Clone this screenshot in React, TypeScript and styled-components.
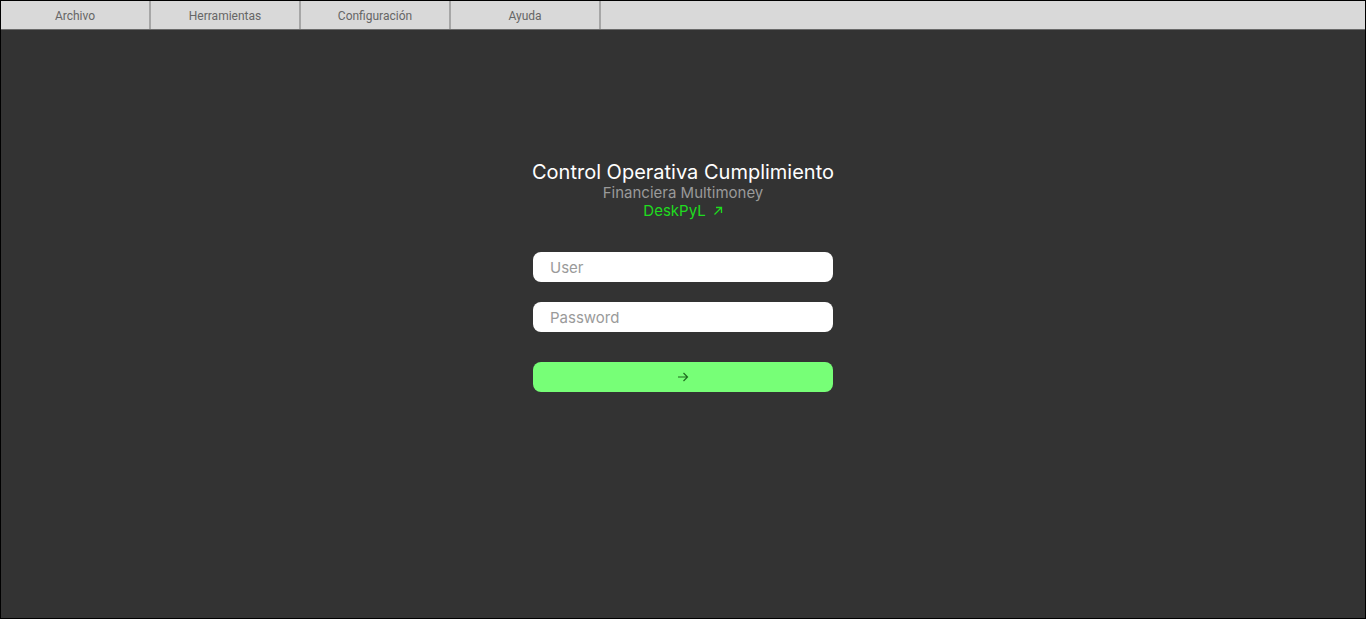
import React from "react";
import styled, { createGlobalStyle } from "styled-components";

const Global = createGlobalStyle`
  html, body { margin: 0; padding: 0; height: 100%; background: #333; }
  #root { height: 100%; }
  * { box-sizing: border-box; }
`;

const Frame = styled.div`
  width: 1366px;
  height: 619px;
  border: 1px solid #000;
  background: #333333;
  display: flex;
  flex-direction: column;
  overflow: hidden;
`;

const MenuBar = styled.nav`
  height: 29px;
  flex: 0 0 29px;
  background: #d9d9d9;
  border-bottom: 1px solid #6b6b6b;
  display: flex;
`;

const MenuItem = styled.div`
  width: 150px;
  height: 100%;
  border-right: 2px solid #a6a6a6;
  display: flex;
  align-items: center;
  justify-content: center;
  font-family: Roboto, "Liberation Sans", sans-serif;
  font-size: 12px;
  color: #666666;
  padding-top: 2px;
`;

const Main = styled.main`
  flex: 1;
  display: flex;
  flex-direction: column;
  align-items: center;
  padding-top: 130px;
  font-family: Inter, "Noto Sans", sans-serif;
`;

const Title = styled.h1`
  margin: 0;
  font-size: 20px;
  font-weight: 400;
  color: #ffffff;
  line-height: 24px;
`;

const Subtitle = styled.div`
  font-size: 15px;
  color: #9a9a9a;
  line-height: 18px;
`;

const Link = styled.div`
  font-size: 15px;
  color: #1fdc1f;
  line-height: 20px;
  display: flex;
  align-items: center;
  gap: 7px;
  margin-top: -1px;
`;

const Form = styled.form`
  margin-top: 31px;
  width: 300px;
  display: flex;
  flex-direction: column;
  gap: 20px;
`;

const Input = styled.input`
  width: 300px;
  height: 30px;
  border: none;
  border-radius: 8px;
  background: #fff;
  padding: 0 17px;
  font-family: Inter, "Noto Sans", sans-serif;
  font-size: 15px;
  color: #333;
  outline: none;
  &::placeholder { color: #9a9a9a; }
`;

const Button = styled.button`
  margin-top: 10px;
  width: 300px;
  height: 30px;
  border: none;
  border-radius: 8px;
  background: #77ff77;
  display: flex;
  align-items: center;
  justify-content: center;
  cursor: pointer;
  padding: 0;
`;

export default function App() {
  return (
    <>
      <Global />
      <Frame>
        <MenuBar>
          <MenuItem>Archivo</MenuItem>
          <MenuItem>Herramientas</MenuItem>
          <MenuItem>Configuración</MenuItem>
          <MenuItem>Ayuda</MenuItem>
        </MenuBar>
        <Main>
          <Title>Control Operativa Cumplimiento</Title>
          <Subtitle>Financiera Multimoney</Subtitle>
          <Link>
            DeskPyL
            <svg width="10" height="10" viewBox="0 0 10 10" fill="none" stroke="#1fdc1f" strokeWidth="1.3">
              <path d="M1.5 8.5 L8.5 1.5 M3 1.5 H8.5 V7" />
            </svg>
          </Link>
          <Form onSubmit={(e) => e.preventDefault()}>
            <Input placeholder="User" />
            <Input placeholder="Password" type="password" />
            <Button type="submit">
              <svg width="12" height="10" viewBox="0 0 12 10" fill="none" stroke="#1f6b1f" strokeWidth="1.2">
                <path d="M1 5 H10.5 M6.5 1 L10.5 5 L6.5 9" />
              </svg>
            </Button>
          </Form>
        </Main>
      </Frame>
    </>
  );
}
